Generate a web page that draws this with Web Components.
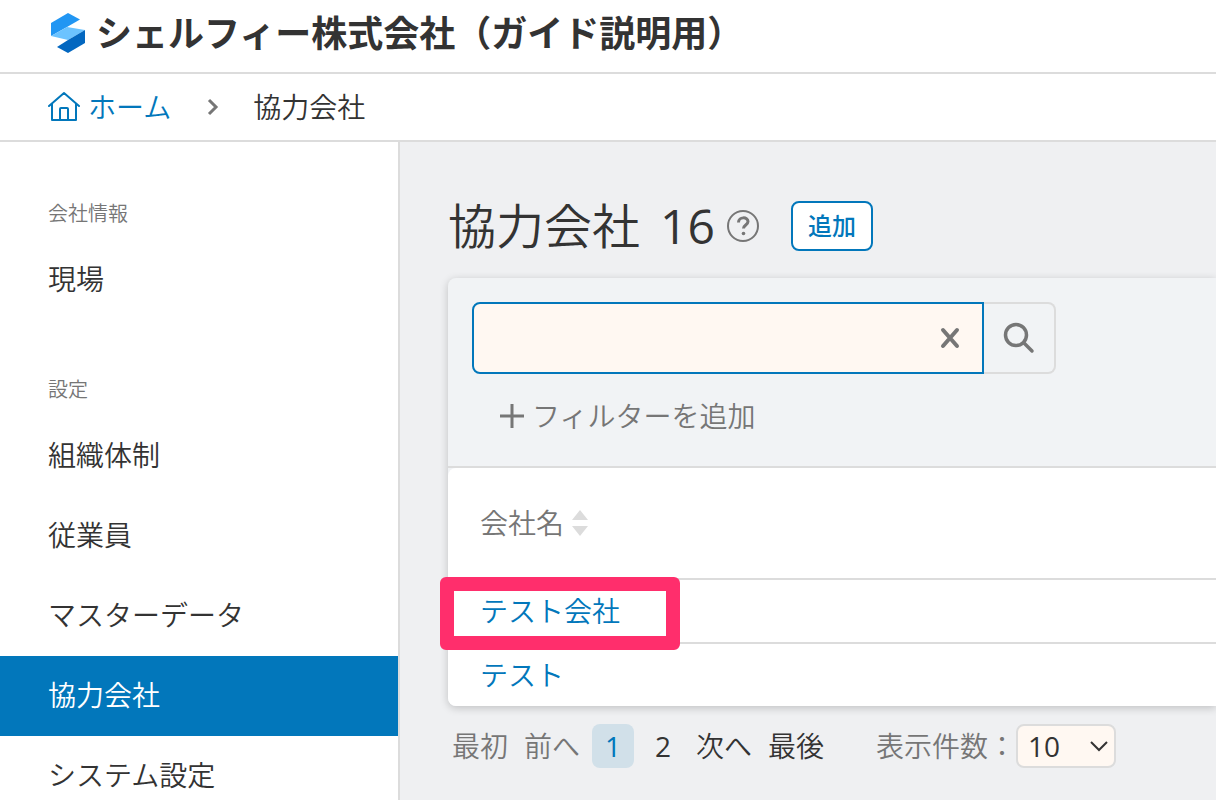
<!DOCTYPE html>
<html lang="ja">
<head>
<meta charset="utf-8">
<meta name="viewport" content="width=device-width, initial-scale=1">
<title>協力会社</title>
<style>
  :root {
    --blue: #0277bb;
    --text: #333;
    --muted: #767676;
    --line: #dcdcdc;
    --page: #eff0f2;
    --field: #fff8f2;
  }
  body {
    margin: 0;
    height: 100vh;
    overflow: hidden;
    background: #fff;
    color: var(--text);
    font: 350 28px/40px "Open Sans", "Noto Sans CJK JP", sans-serif;
  }
</style>
</head>
<body>
<app-shell>
  <app-header slot="header">シェルフィー株式会社（ガイド説明用）</app-header>
  <bread-crumb slot="header">
    <span slot="home">ホーム</span>
    協力会社
  </bread-crumb>

  <side-nav slot="side">
    <nav-group label="会社情報">
      <nav-item>現場</nav-item>
    </nav-group>
    <nav-group label="設定">
      <nav-item>組織体制</nav-item>
      <nav-item>従業員</nav-item>
      <nav-item>マスターデータ</nav-item>
      <nav-item current>協力会社</nav-item>
      <nav-item>システム設定</nav-item>
    </nav-group>
  </side-nav>

  <page-title count="16">協力会社</page-title>
  <data-card>
    <search-panel slot="tools"></search-panel>
    <company-table></company-table>
  </data-card>
  <page-nav></page-nav>
</app-shell>

<script>
const define = (name, render) => {
  customElements.define(name, class extends HTMLElement {
    constructor() {
      super();
      this.attachShadow({ mode: 'open' });
    }

    connectedCallback() {
      this.shadowRoot.innerHTML = render(this);
    }
  });
};

define('app-shell', () => `
  <style>
    :host { display: flex; flex-direction: column; height: 100%; }
    .body { display: flex; flex: 1; min-height: 0; }
    aside {
      flex: none;
      width: 398px;
      overflow: hidden;
      border-right: 2px solid var(--line);
    }
    main {
      flex: 1;
      min-width: 0;
      padding: 48px 0 0 48px;
      background: var(--page);
    }
  </style>
  <header><slot name="header"></slot></header>
  <div class="body">
    <aside><slot name="side"></slot></aside>
    <main><slot></slot></main>
  </div>
`);

define('app-header', () => `
  <style>
    :host {
      display: flex;
      align-items: center;
      gap: 10px;
      padding: 8px 48px 14px;
      border-bottom: 2px solid var(--line);
    }
    svg { flex: none; margin-left: 2px; }
    h1 {
      margin: 0;
      padding-top: 2px;
      font-size: 36px;
      line-height: 48px;
      font-weight: 700;
    }
  </style>
  <svg width="36" height="40" viewBox="0 0 36 40" aria-hidden="true">
    <path d="M1 10 18 0l12 6.500L17 14 1 23z" fill="#2196f3"/>
    <path d="M1 23 17 14l18 3-17 10z" fill="#6cc3ff"/>
    <path d="M35 17v13L18 40 7 34l11-7z" fill="#0367c0"/>
  </svg>
  <h1><slot></slot></h1>
`);

define('bread-crumb', () => `
  <style>
    :host {
      display: block;
      padding: 13px 48px;
      border-bottom: 2px solid var(--line);
    }
    nav { display: flex; align-items: center; }
    a {
      display: flex;
      align-items: center;
      gap: 8px;
      color: var(--blue);
      text-decoration: none;
    }
    .sep { margin: 0 34px 0 36px; }
  </style>
  <nav aria-label="パンくず">
    <a href="#home">
      <svg width="32" height="32" viewBox="0 0 32 32" fill="none" stroke="currentColor" stroke-width="2" stroke-linejoin="round" stroke-linecap="round" aria-hidden="true">
        <path d="M1 15 16 2l15 13M4 13v16h24V13M12 29V18q0-1 1-1h6q1 0 1 1v11"/>
      </svg>
      <slot name="home"></slot>
    </a>
    <svg class="sep" width="12" height="18" viewBox="0 0 12 18" fill="none" stroke="#767676" stroke-width="3" aria-hidden="true">
      <path d="m2 2 7 7-7 7"/>
    </svg>
    <span><slot></slot></span>
  </nav>
`);

define('side-nav', () => `
  <style>
    :host { display: block; }
    nav { display: flex; flex-direction: column; gap: 44px; padding-top: 46px; }
  </style>
  <nav aria-label="メニュー"><slot></slot></nav>
`);

define('nav-group', (el) => `
  <style>
    :host { display: block; }
    h2 {
      margin: 0;
      padding: 12px 48px;
      color: var(--muted);
      font-size: 20px;
      line-height: 28px;
      font-weight: inherit;
    }
  </style>
  <h2>${el.getAttribute('label')}</h2>
  <slot></slot>
`);

define('nav-item', (el) => `
  <style>
    :host { display: block; }
    a {
      display: block;
      padding: 19px 48px 21px;
      color: inherit;
      text-decoration: none;
    }
    :host([current]) a { background: var(--blue); color: #fff; }
  </style>
  <a href="#menu" ${el.hasAttribute('current') ? 'aria-current="page"' : ''}><slot></slot></a>
`);

define('page-title', (el) => `
  <style>
    :host { display: flex; align-items: center; padding-bottom: 16px; }
    h2 {
      display: flex;
      gap: 20px;
      margin: 0;
      font-size: 48px;
      line-height: 72px;
      font-weight: inherit;
    }
    .count { font-weight: 400; }
    svg { margin: 0 32px 0 12px; color: var(--muted); }
    button {
      padding: 4px 15px;
      border: 2px solid var(--blue);
      border-radius: 8px;
      background: #fff;
      color: var(--blue);
      font: 500 24px/38px "Open Sans", "Noto Sans CJK JP", sans-serif;
    }
  </style>
  <h2><slot></slot><span class="count">${el.getAttribute('count')}</span></h2>
  <svg width="32" height="32" viewBox="0 0 32 32" fill="none" stroke="currentColor" role="img" aria-label="ヘルプ">
    <circle cx="16" cy="16" r="15" stroke-width="2"/>
    <path d="M11.500 12.500c0-6 9.500-6 9.500-1 0 3.500-4.500 3.500-4.500 7" stroke-width="3"/>
    <circle cx="16.500" cy="23.500" r="1.800" fill="currentColor" stroke="none"/>
  </svg>
  <button type="button">追加</button>
`);

define('data-card', () => `
  <style>
    :host {
      display: block;
      border-radius: 8px 0 0 8px;
      background: #f1f3f5;
      box-shadow: 0 2px 8px rgba(0, 0, 0, .2);
    }
    .tools { border-bottom: 2px solid var(--line); }
  </style>
  <div class="tools"><slot name="tools"></slot></div>
  <slot></slot>
`);

define('search-panel', () => `
  <style>
    :host { display: block; padding: 24px 24px 30px; }
    form { display: flex; max-width: 584px; }
    .field { position: relative; flex: 1; display: flex; }
    input {
      flex: 1;
      min-width: 0;
      height: 72px;
      box-sizing: border-box;
      padding: 0 64px 0 20px;
      border: 2px solid var(--blue);
      border-radius: 8px 0 0 8px;
      background: var(--field);
      font: inherit;
      outline: none;
    }
    button {
      display: flex;
      align-items: center;
      padding: 0;
      border: 0;
      background: none;
      color: var(--muted);
      font: inherit;
    }
    .clear { position: absolute; right: 22px; top: 24px; }
    .go {
      flex: none;
      justify-content: center;
      width: 72px;
      box-sizing: border-box;
      border: 2px solid var(--line);
      border-left: 0;
      border-radius: 0 8px 8px 0;
    }
    .add { gap: 8px; margin: 22px 0 0 28px; }
  </style>
  <form role="search">
    <div class="field">
      <input type="text" aria-label="検索">
      <button class="clear" type="button" aria-label="クリア">
        <svg width="24" height="24" viewBox="0 0 24 24" stroke="currentColor" stroke-width="4" stroke-linecap="round" aria-hidden="true">
          <path d="m5 4 14 16M19 4 5 20"/>
        </svg>
      </button>
    </div>
    <button class="go" type="button" aria-label="検索する">
      <svg width="32" height="32" viewBox="0 0 32 32" fill="none" stroke="currentColor" stroke-width="3.500" stroke-linecap="round" aria-hidden="true">
        <circle cx="13" cy="13" r="10.500"/>
        <path d="m21 21 8 8"/>
      </svg>
    </button>
  </form>
  <button class="add" type="button">
    <svg width="24" height="24" viewBox="0 0 24 24" stroke="currentColor" stroke-width="3" aria-hidden="true">
      <path d="M12 0v24M0 12h24"/>
    </svg>
    フィルターを追加
  </button>
`);

const companies = [
  { name: 'テスト会社', marked: true },
  { name: 'テスト' },
];

define('company-table', () => `
  <style>
    :host { display: block; border-radius: 8px 0 0 8px; background: #fff; }
    table { width: 100%; border-collapse: separate; border-spacing: 0; }
    th, td { padding: 0 32px; text-align: left; font-weight: inherit; }
    th { height: 110px; color: var(--muted); }
    td { height: 62px; border-top: 2px solid var(--line); }
    button {
      display: flex;
      align-items: center;
      gap: 8px;
      padding: 0;
      border: 0;
      background: none;
      color: inherit;
      font: inherit;
    }
    a { color: var(--blue); text-decoration: none; }
    .marked { position: relative; }
    /* frame drawn over the row and its rules */
    .marked::after {
      content: "";
      position: absolute;
      left: -8px;
      top: -3px;
      width: 240px;
      height: 73px;
      box-sizing: border-box;
      border: 14px solid #ff2e6c;
      border-radius: 6px;
      pointer-events: none;
    }
  </style>
  <table>
    <thead>
      <tr>
        <th scope="col">
          <button type="button">会社名
            <svg width="16" height="26" viewBox="0 0 16 26" fill="#dcdcdc" aria-hidden="true">
              <path d="M8 0 16 10H0zM0 16h16L8 26z"/>
            </svg>
          </button>
        </th>
      </tr>
    </thead>
    <tbody>
      ${companies.map(({ name, marked }) => `
        <tr><td class="${marked ? 'marked' : ''}"><a href="#company">${name}</a></td></tr>
      `).join('')}
    </tbody>
  </table>
`);

define('page-nav', () => `
  <style>
    :host { display: flex; align-items: center; gap: 52px; padding: 18px 4px; }
    nav { display: flex; align-items: center; gap: 16px; }
    a { color: inherit; text-decoration: none; }
    .off, label { color: var(--muted); }
    .num {
      box-sizing: border-box;
      min-width: 42px;
      margin-left: -4px;
      padding: 2px 8px;
      border-radius: 8px;
      font-weight: 400;
      text-align: center;
    }
    .num + .num { margin: 0 -4px 0 -8px; }
    .on { background: #d1e0e9; color: var(--blue); }
    .size { display: flex; align-items: center; }
    .pick { position: relative; display: flex; }
    select {
      appearance: none;
      width: 100px;
      height: 44px;
      padding: 0 10px;
      border: 2px solid var(--line);
      border-radius: 8px;
      background: var(--field);
      color: var(--text);
      font: inherit;
      font-weight: 400;
    }
    svg { position: absolute; right: 8px; top: 17px; pointer-events: none; }
  </style>
  <nav aria-label="ページ">
    <span class="off">最初</span>
    <span class="off">前へ</span>
    <a class="num on" href="#p1" aria-current="page">1</a>
    <a class="num" href="#p2">2</a>
    <a href="#p2">次へ</a>
    <a href="#p2">最後</a>
  </nav>
  <div class="size">
    <label for="size">表示件数：</label>
    <div class="pick">
      <select id="size"><option>10</option><option>20</option><option>50</option></select>
      <svg width="18" height="12" viewBox="0 0 18 12" fill="none" stroke="#333" stroke-width="2" aria-hidden="true">
        <path d="m1 1 8 8 8-8"/>
      </svg>
    </div>
  </div>
`);
</script>
</body>
</html>
